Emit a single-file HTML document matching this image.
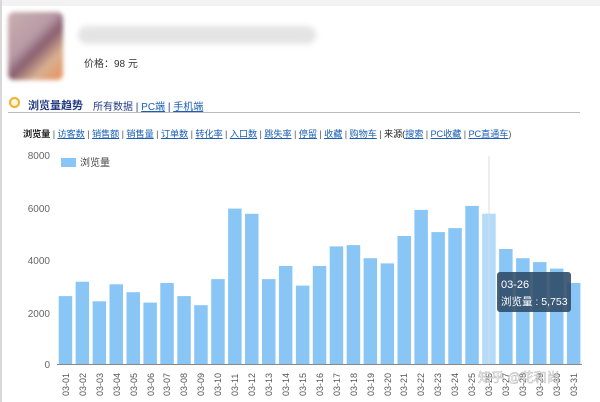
<!DOCTYPE html>
<html><head><meta charset="utf-8"><style>
*{margin:0;padding:0}
body{width:600px;height:402px;background:#fff;position:relative;overflow:hidden;font-family:"Liberation Sans","Noto Sans CJK SC",sans-serif;font-size:10px;color:#333}
.a{position:absolute;white-space:nowrap}
a{color:#1a5fb4;text-decoration:underline}
</style></head><body>
<div class="a" style="left:0;top:0;width:600px;height:6px;background:#f2f2f2"></div>
<div class="a" style="left:0;top:0;width:2px;height:402px;background:#d8d8d8"></div>
<div class="a" style="left:8px;top:12px;width:55px;height:68px;background:linear-gradient(135deg,#c9b0b0,#b89aa5 40%,#8a6070 55%,#d8b090 75%,#e8905a);filter:blur(2px);border-radius:6px"></div>
<div class="a" style="left:78px;top:26px;width:238px;height:18px;background:#e4e4e4;filter:blur(3px);border-radius:9px"></div>
<div class="a" style="left:84px;top:55px;font-size:10px">价格：98 元</div>
<div class="a" style="left:9px;top:97px;width:7px;height:7px;border-radius:50%;border:2px solid #f0b030;background:#fff6d8"></div>
<div class="a" style="left:28px;top:97px;font-size:11px;font-weight:bold;color:#223a80">浏览量趋势</div>
<div class="a" style="left:93px;top:98px;font-size:10px;color:#223a80">所有数据 | <a>PC端</a> | <a>手机端</a></div>
<div class="a" style="left:8px;top:112px;width:572px;height:1px;background:#bbb"></div>
<div class="a" style="left:23px;top:126px;font-size:9.2px;color:#555;letter-spacing:-0.1px"><b style="color:#222">浏览量</b> | <a>访客数</a> | <a>销售额</a> | <a>销售量</a> | <a>订单数</a> | <a>转化率</a> | <a>入口数</a> | <a>跳失率</a> | <a>停留</a> | <a>收藏</a> | <a>购物车</a> | <span style="color:#222">来源(</span><a>搜索</a> | <a>PC收藏</a> | <a>PC直通车</a>)</div>
<svg class="a" style="left:0;top:0" width="600" height="402">
<g fill="#666" font-size="10" text-anchor="end" font-family="Liberation Sans,sans-serif">
<text x="50" y="159">8000</text><text x="50" y="212">6000</text><text x="50" y="264">4000</text><text x="50" y="317">2000</text><text x="50" y="368">0</text></g>
<rect x="61" y="158" width="15" height="9" fill="#89c6f6"/>
<text x="80" y="166" font-size="10" fill="#444" font-family="Liberation Sans,Noto Sans CJK SC,sans-serif">浏览量</text>
<g fill="#89c6f6">
<rect x="58.7" y="296.1" width="13.5" height="67.9"/>
<rect x="75.6" y="281.7" width="13.5" height="82.3"/>
<rect x="92.6" y="301.3" width="13.5" height="62.7"/>
<rect x="109.5" y="284.3" width="13.5" height="79.7"/>
<rect x="126.5" y="292.2" width="13.5" height="71.8"/>
<rect x="143.4" y="302.6" width="13.5" height="61.4"/>
<rect x="160.3" y="283" width="13.5" height="81"/>
<rect x="177.3" y="296.1" width="13.5" height="67.9"/>
<rect x="194.2" y="305.2" width="13.5" height="58.8"/>
<rect x="211.2" y="279.1" width="13.5" height="84.9"/>
<rect x="228.1" y="208.6" width="13.5" height="155.4"/>
<rect x="245" y="213.8" width="13.5" height="150.2"/>
<rect x="262" y="279.1" width="13.5" height="84.9"/>
<rect x="278.9" y="266" width="13.5" height="98"/>
<rect x="295.9" y="285.6" width="13.5" height="78.4"/>
<rect x="312.8" y="266" width="13.5" height="98"/>
<rect x="329.7" y="246.4" width="13.5" height="117.6"/>
<rect x="346.7" y="245.1" width="13.5" height="118.9"/>
<rect x="363.6" y="258.2" width="13.5" height="105.8"/>
<rect x="380.6" y="263.4" width="13.5" height="100.6"/>
<rect x="397.5" y="236" width="13.5" height="128"/>
<rect x="414.4" y="209.9" width="13.5" height="154.1"/>
<rect x="431.4" y="232.1" width="13.5" height="131.9"/>
<rect x="448.3" y="228.1" width="13.5" height="135.9"/>
<rect x="465.3" y="205.9" width="13.5" height="158.1"/>
<rect x="482.2" y="213.7" width="13.5" height="150.3" fill="#b3dbfa"/>
<rect x="499.1" y="249" width="13.5" height="115"/>
<rect x="516.1" y="258.2" width="13.5" height="105.8"/>
<rect x="533" y="262.1" width="13.5" height="101.9"/>
<rect x="550" y="268.6" width="13.5" height="95.4"/>
<rect x="566.9" y="283" width="13.5" height="81"/>
</g>
<line x1="489" y1="156" x2="489" y2="364" stroke="#ddd" stroke-width="1"/>
<line x1="57" y1="364.5" x2="582" y2="364.5" stroke="#888"/>
<g fill="#555" font-size="9" font-family="Liberation Sans,sans-serif">
<text transform="translate(69,396) rotate(-90)">03-01</text>
<text transform="translate(86,396) rotate(-90)">03-02</text>
<text transform="translate(103,396) rotate(-90)">03-03</text>
<text transform="translate(120,396) rotate(-90)">03-04</text>
<text transform="translate(137,396) rotate(-90)">03-05</text>
<text transform="translate(154,396) rotate(-90)">03-06</text>
<text transform="translate(170,396) rotate(-90)">03-07</text>
<text transform="translate(187,396) rotate(-90)">03-08</text>
<text transform="translate(204,396) rotate(-90)">03-09</text>
<text transform="translate(221,396) rotate(-90)">03-10</text>
<text transform="translate(238,396) rotate(-90)">03-11</text>
<text transform="translate(255,396) rotate(-90)">03-12</text>
<text transform="translate(272,396) rotate(-90)">03-13</text>
<text transform="translate(289,396) rotate(-90)">03-14</text>
<text transform="translate(306,396) rotate(-90)">03-15</text>
<text transform="translate(323,396) rotate(-90)">03-16</text>
<text transform="translate(340,396) rotate(-90)">03-17</text>
<text transform="translate(357,396) rotate(-90)">03-18</text>
<text transform="translate(374,396) rotate(-90)">03-19</text>
<text transform="translate(391,396) rotate(-90)">03-20</text>
<text transform="translate(407,396) rotate(-90)">03-21</text>
<text transform="translate(424,396) rotate(-90)">03-22</text>
<text transform="translate(441,396) rotate(-90)">03-23</text>
<text transform="translate(458,396) rotate(-90)">03-24</text>
<text transform="translate(475,396) rotate(-90)">03-25</text>
<text transform="translate(492,396) rotate(-90)">03-26</text>
<text transform="translate(509,396) rotate(-90)">03-27</text>
<text transform="translate(526,396) rotate(-90)">03-28</text>
<text transform="translate(543,396) rotate(-90)">03-29</text>
<text transform="translate(560,396) rotate(-90)">03-30</text>
<text transform="translate(577,396) rotate(-90)">03-31</text>
</g>
<text x="478" y="382" font-size="13" fill="#fff" fill-opacity="0.7" stroke="#aaa" stroke-width="0.4" font-family="Liberation Sans,Noto Sans CJK SC,sans-serif">知乎 @花和尚</text>
<rect x="497" y="272" width="74" height="40" rx="3" fill="#2d4a66" fill-opacity="0.88"/>
<text x="501" y="288" font-size="11" fill="#fff" font-family="Liberation Sans,sans-serif">03-26</text>
<text x="501" y="305" font-size="10.5" fill="#fff" font-family="Liberation Sans,Noto Sans CJK SC,sans-serif">浏览量 : 5,753</text>
</svg>
</body></html>
